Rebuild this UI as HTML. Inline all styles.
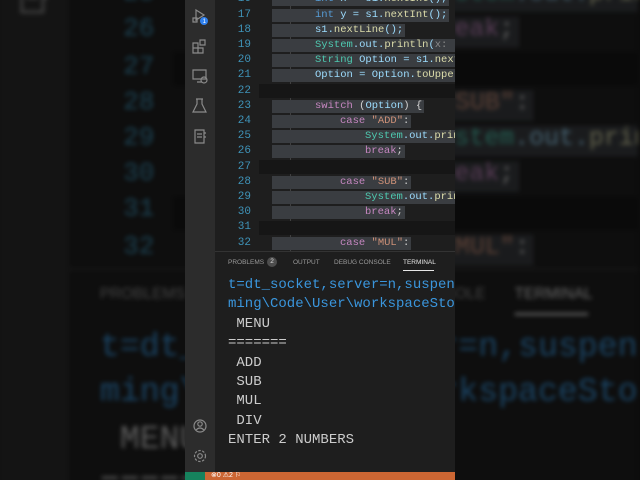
<!DOCTYPE html>
<html style="overflow:hidden;width:640px;height:480px"><head><style>
*{margin:0;padding:0;box-sizing:border-box}
body{width:640px;height:480px;background:#0c0c0c;overflow:hidden;position:relative}
.clip{position:absolute;left:0;top:0;width:640px;height:480px;overflow:hidden}
.vs{position:absolute;width:270px;height:480px;background:#1e1e1e;overflow:hidden;font-family:"Liberation Mono",monospace}
.ab{position:absolute;left:0;top:0;width:30px;height:472px;background:#2c2c2c}
.ln{position:absolute;left:40px;width:26px;text-align:right;font-size:11px;color:#3f93b8;line-height:15px}
.cl{position:absolute;font-size:10.5px;line-height:13px;color:#9cdcfe;white-space:pre;background:#3a3d41;padding-right:2px}
.sel{position:absolute;left:87px;height:13px;background:#3a3d41}
.blk{position:absolute;left:74px;height:14px;width:196px;background:#161616}
.k{color:#c586c0}.t{color:#569cd6}.c{color:#4ec9b0}.s{color:#ce9178}.f{color:#dcdcaa}.w{color:#d4d4d4}.h{color:#8a8a8a}
.guide{position:absolute;left:105px;top:0;width:1px;height:251px;background:#404040}
.tabs{position:absolute;top:252px;left:30px;right:0;height:20px;font-family:"Liberation Sans",sans-serif;font-size:6.5px;color:#9a9a9a}
.tabs span{position:absolute;top:7px}
.term{position:absolute;left:43px;font-size:14px;line-height:19.4px;color:#cccccc;white-space:pre}
.sb{position:absolute;left:0;top:472px;width:270px;height:8px;background:#cc6633}
</style></head><body>

<div class="clip"><div id="bg" style="position:absolute;left:0;top:0;width:270px;height:480px;transform-origin:0 0;transform:translate(-2px,-327px) scale(2.37);filter:blur(1px) brightness(0.45)"></div></div>

<div class="vs" id="fg" style="left:185px;top:0">
 <div class="ab">
  <svg width="30" height="472" viewBox="0 0 30 472" fill="none" stroke="#8a8a8a" stroke-width="1.2">
   <path d="M11 10 L19 15 L11 20 Z M8 18 h4 v4 h-4z"/>
   <circle cx="19" cy="21" r="4" fill="#2f80ed" stroke="none"/>
   <text x="17.6" y="23.2" font-size="6" fill="#fff" stroke="none" font-family="Liberation Sans">1</text>
   <path d="M8 43 h5 v5 h-5z M8 48 h5 v5 h-5z M13 48 h5 v5 h-5z M15 40 h5 v5 h-5z"/>
   <path d="M8 70 h13 v9 h-13z M12 82 h5"/><circle cx="19" cy="80" r="3"/>
   <path d="M12 99 v5 l-4 8 h13 l-4 -8 v-5 M11 99 h7"/>
   <path d="M10 130 h9 v13 h-9z M12 134 h5 M12 137 h5 M19 133 h2 M19 137 h2"/>
   <circle cx="15" cy="426" r="6"/><circle cx="15" cy="424" r="2.2"/><path d="M11 430 q4 -4 8 0"/>
   <circle cx="15" cy="456" r="2.3"/><circle cx="15" cy="456" r="5.5" stroke-dasharray="2.5 1.5"/>
  </svg>
 </div>
 <div class="guide"></div>
 <div id="code"></div>
 <div style="position:absolute;left:30px;top:251px;width:240px;height:1px;background:#333"></div>
 <div class="tabs">
  <span style="left:13px">PROBLEMS</span>
  <span style="left:52px;top:5px;width:10px;height:10px;border-radius:5px;background:#4d4d4d;color:#ddd;text-align:center;line-height:10px">2</span>
  <span style="left:78px">OUTPUT</span>
  <span style="left:119px">DEBUG CONSOLE</span>
  <span style="left:188px;color:#e7e7e7">TERMINAL</span>
  <span style="left:188px;top:18px;width:31px;height:1px;background:#e7e7e7"></span>
 </div>
 <div class="term" style="top:276px;color:#3a96dd">t=dt_socket,server=n,suspend=y</div>
 <div class="term" style="top:295.4px;color:#3a96dd">ming\Code\User\workspaceStorage</div>
 <div class="term" style="top:314.8px;height:150px;overflow:hidden"> MENU
=======
 ADD
 SUB
 MUL
 DIV
ENTER 2 NUMBERS</div>
 <div class="sb"></div>
 <div style="position:absolute;left:0;top:472px;width:20px;height:8px;background:#16825d"></div>
 <div style="position:absolute;left:26px;top:472px;height:8px;overflow:hidden;font-size:7px;line-height:8px;color:#fff;font-family:'Liberation Sans',sans-serif">⊗0 ⚠2 ⚐</div>
</div>

<script>
var lines=[
[16,130,'<span class="t">int</span> x = s1.<span class="f">nextInt</span>();'],
[17,130,'<span class="t">int</span> y = s1.<span class="f">nextInt</span>();'],
[18,130,'s1.<span class="f">nextLine</span>();'],
[19,130,'<span class="c">System</span>.out.<span class="f">println</span>(<span class="h">x:</span> <span class="s">"Enter"</span>'],
[20,130,'<span class="c">String</span> Option = s1.<span class="f">next</span>();'],
[21,130,'Option = Option.<span class="f">toUpperCase</span>();'],
[22,-1,''],
[23,130,'<span class="k">switch</span> <span class="w">(</span>Option<span class="w">)</span> <span class="w">{</span>'],
[24,155,'<span class="k">case</span> <span class="s">"ADD"</span><span class="w">:</span>'],
[25,180,'<span class="c">System</span>.out.<span class="f">println</span>(x+y);'],
[26,180,'<span class="k">break</span><span class="w">;</span>'],
[27,-1,''],
[28,155,'<span class="k">case</span> <span class="s">"SUB"</span><span class="w">:</span>'],
[29,180,'<span class="c">System</span>.out.<span class="f">println</span>(x-y);'],
[30,180,'<span class="k">break</span><span class="w">;</span>'],
[31,-1,''],
[32,155,'<span class="k">case</span> <span class="s">"MUL"</span><span class="w">:</span>']
];
var h='';
lines.forEach(function(l){
 var y=15+(l[0]-17)*15.2;
 h+='<div class="ln" style="top:'+(y-7.5)+'px">'+l[0]+'</div>';
 if(l[1]<0){h+='<div class="blk" style="top:'+(y-7)+'px"></div>';}
 else{
  h+='<div class="sel" style="top:'+(y-6.5)+'px;width:'+(l[1]-87)+'px"></div>';
  h+='<div class="cl" style="left:'+l[1]+'px;top:'+(y-6.5)+'px">'+l[2]+'</div>';
 }
});
document.getElementById('code').innerHTML=h;
var fg=document.getElementById('fg');
var c=fg.cloneNode(true);c.removeAttribute('id');c.style.left='0px';
document.getElementById('bg').appendChild(c);
</script>
</body></html>
